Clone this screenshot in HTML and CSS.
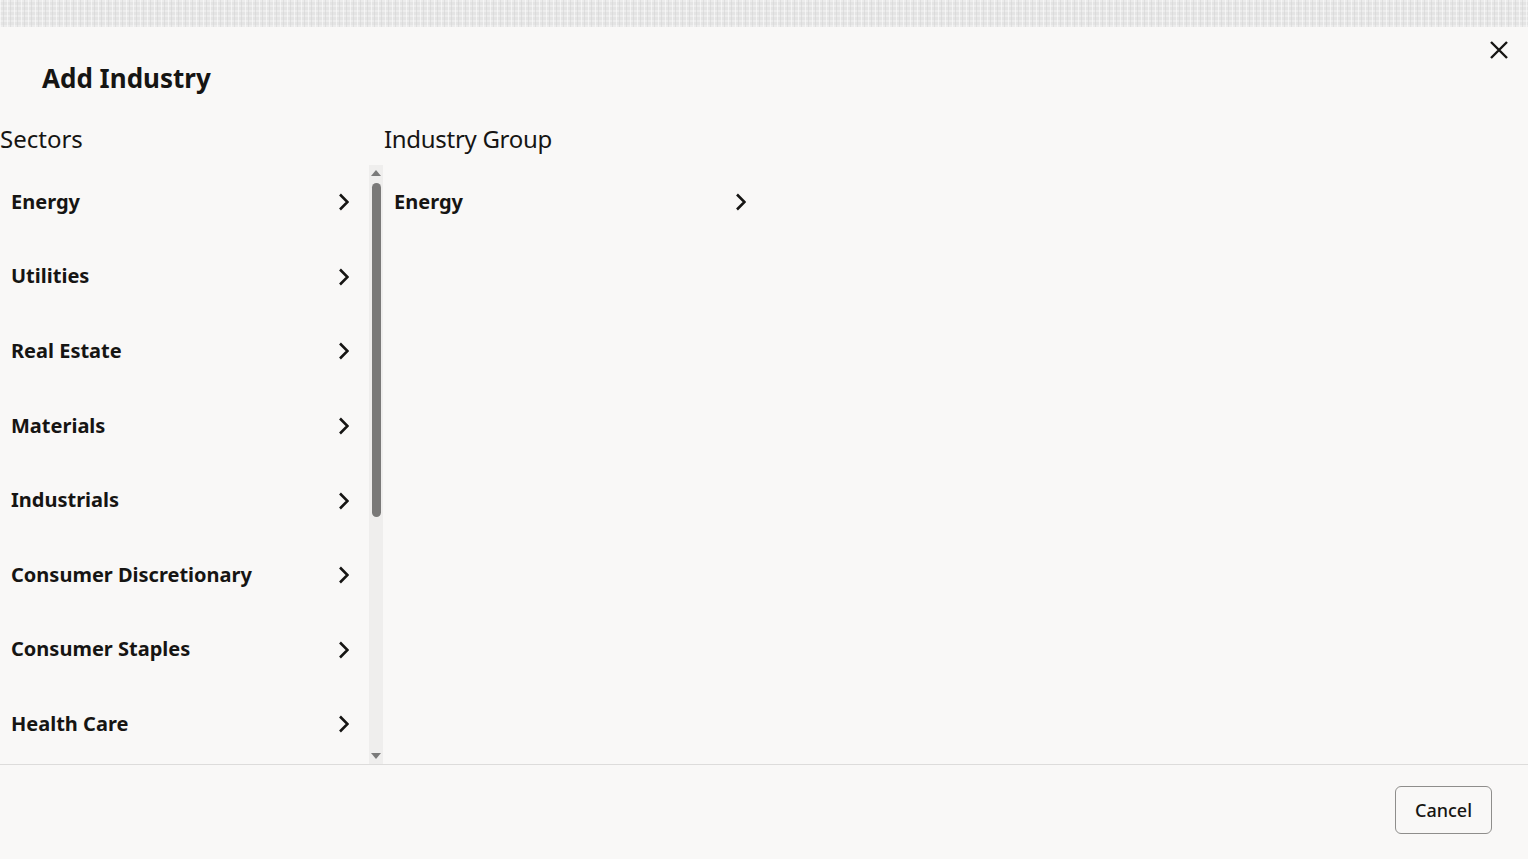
FILE: index.html
```html
<!DOCTYPE html>
<html lang="en">
<head>
<meta charset="utf-8">
<title>Add Industry</title>
<link rel="stylesheet" href="styles.css">
</head>
<body>
<div class="backdrop"></div>
<div class="dialog">
  <header class="dialog-header">
    <h1 class="title">Add Industry</h1>
    <button class="close" aria-label="Close">
      <svg width="20" height="20" viewBox="0 0 20 20"><path d="M2 2 L18 18 M18 2 L2 18" stroke="#161513" stroke-width="2.4" fill="none"/></svg>
    </button>
  </header>
  <div class="dialog-body">
    <section class="column">
      <h2 class="col-title">Sectors</h2>
      <div class="list-wrap">
        <ul class="list">
          <li class="row"><span>Energy</span><svg class="chev" width="12" height="18" viewBox="0 0 12 18"><path d="M3 1.5 L10.5 9 L3 16.5" stroke="#161513" stroke-width="2.6" fill="none"/></svg></li>
          <li class="row"><span>Utilities</span><svg class="chev" width="12" height="18" viewBox="0 0 12 18"><path d="M3 1.5 L10.5 9 L3 16.5" stroke="#161513" stroke-width="2.6" fill="none"/></svg></li>
          <li class="row"><span>Real Estate</span><svg class="chev" width="12" height="18" viewBox="0 0 12 18"><path d="M3 1.5 L10.5 9 L3 16.5" stroke="#161513" stroke-width="2.6" fill="none"/></svg></li>
          <li class="row"><span>Materials</span><svg class="chev" width="12" height="18" viewBox="0 0 12 18"><path d="M3 1.5 L10.5 9 L3 16.5" stroke="#161513" stroke-width="2.6" fill="none"/></svg></li>
          <li class="row"><span>Industrials</span><svg class="chev" width="12" height="18" viewBox="0 0 12 18"><path d="M3 1.5 L10.5 9 L3 16.5" stroke="#161513" stroke-width="2.6" fill="none"/></svg></li>
          <li class="row"><span>Consumer Discretionary</span><svg class="chev" width="12" height="18" viewBox="0 0 12 18"><path d="M3 1.5 L10.5 9 L3 16.5" stroke="#161513" stroke-width="2.6" fill="none"/></svg></li>
          <li class="row"><span>Consumer Staples</span><svg class="chev" width="12" height="18" viewBox="0 0 12 18"><path d="M3 1.5 L10.5 9 L3 16.5" stroke="#161513" stroke-width="2.6" fill="none"/></svg></li>
          <li class="row"><span>Health Care</span><svg class="chev" width="12" height="18" viewBox="0 0 12 18"><path d="M3 1.5 L10.5 9 L3 16.5" stroke="#161513" stroke-width="2.6" fill="none"/></svg></li>
        </ul>
        <div class="scrollbar">
          <span class="arrow-up"></span>
          <span class="thumb"></span>
          <span class="arrow-down"></span>
        </div>
      </div>
    </section>
    <section class="column">
      <h2 class="col-title">Industry Group</h2>
      <ul class="list">
        <li class="row"><span>Energy</span><svg class="chev" width="12" height="18" viewBox="0 0 12 18"><path d="M3 1.5 L10.5 9 L3 16.5" stroke="#161513" stroke-width="2.6" fill="none"/></svg></li>
      </ul>
    </section>
  </div>
  <footer class="dialog-footer">
    <button class="btn">Cancel</button>
  </footer>
</div>
</body>
</html>
```
FILE: styles.css
```css
* { box-sizing: border-box; }
html, body {
  margin: 0;
  padding: 0;
  width: 1528px;
  height: 859px;
  overflow: hidden;
  background: #f9f8f7;
  font-family: "Noto Sans", "Open Sans", sans-serif;
  color: #161513;
}
.backdrop {
  height: 27px;
  background-color: #e4e4e4;
  background-image:
    repeating-linear-gradient(90deg, rgba(255,255,255,0.55) 0 1px, transparent 1px 3px, rgba(210,210,210,0.5) 3px 4px, transparent 4px 7px),
    repeating-linear-gradient(0deg, rgba(255,255,255,0.3) 0 2px, transparent 2px 5px);
}
.dialog {
  height: 832px;
  display: flex;
  flex-direction: column;
  background: #f9f8f7;
}
.dialog-header {
  position: relative;
  padding: 33px 0 0 42px;
  height: 69px;
  flex: none;
}
.title {
  margin: 0;
  font-size: 26px;
  line-height: 36px;
  font-weight: 700;
}
.close {
  position: absolute;
  top: 13px;
  right: 19px;
  width: 20px;
  height: 20px;
  padding: 0;
  border: 0;
  background: none;
  display: flex;
}
.dialog-body {
  flex: 1;
  display: flex;
  min-height: 0;
}
.column {
  width: 383px;
  display: flex;
  flex-direction: column;
}
.col-title {
  margin: 27px 0 10px 0;
  font-size: 24px;
  line-height: 32px;
  font-weight: 400;
}
.column + .column .col-title { padding-left: 1px; letter-spacing: -0.3px; }
.list-wrap {
  flex: 1;
  display: flex;
  min-height: 0;
}
.list {
  list-style: none;
  margin: 0;
  padding: 0;
  flex: 1;
  overflow: hidden;
}
.row {
  height: 74.6px;
  display: flex;
  align-items: center;
  justify-content: space-between;
  padding: 0 20px 0 11px;
  font-size: 20px;
  font-weight: 700;
}
.row span { position: relative; top: -1px; }
.chev { display: block; }
.scrollbar {
  width: 14px;
  background: #efeeed;
  display: flex;
  flex-direction: column;
  align-items: center;
  padding: 5px 0 5px 0;
}
.arrow-up {
  width: 0;
  height: 0;
  border-left: 5px solid transparent;
  border-right: 5px solid transparent;
  border-bottom: 6px solid #7a7a7a;
}
.thumb {
  margin-top: 7px;
  width: 9px;
  height: 334px;
  border-radius: 5px;
  background: #7a7978;
}
.arrow-down {
  margin-top: auto;
  width: 0;
  height: 0;
  border-left: 5px solid transparent;
  border-right: 5px solid transparent;
  border-top: 6px solid #7a7a7a;
}
.dialog-footer {
  height: 95px;
  flex: none;
  border-top: 1px solid #dddcdb;
  display: flex;
  justify-content: flex-end;
  padding: 21px 36px 0 0;
}
.btn {
  width: 97px;
  height: 48px;
  border: 1px solid #8f8e8c;
  border-radius: 6px;
  background: transparent;
  font-family: "Noto Sans", sans-serif;
  font-size: 18px;
  font-weight: 500;
  color: #161513;
}
```
